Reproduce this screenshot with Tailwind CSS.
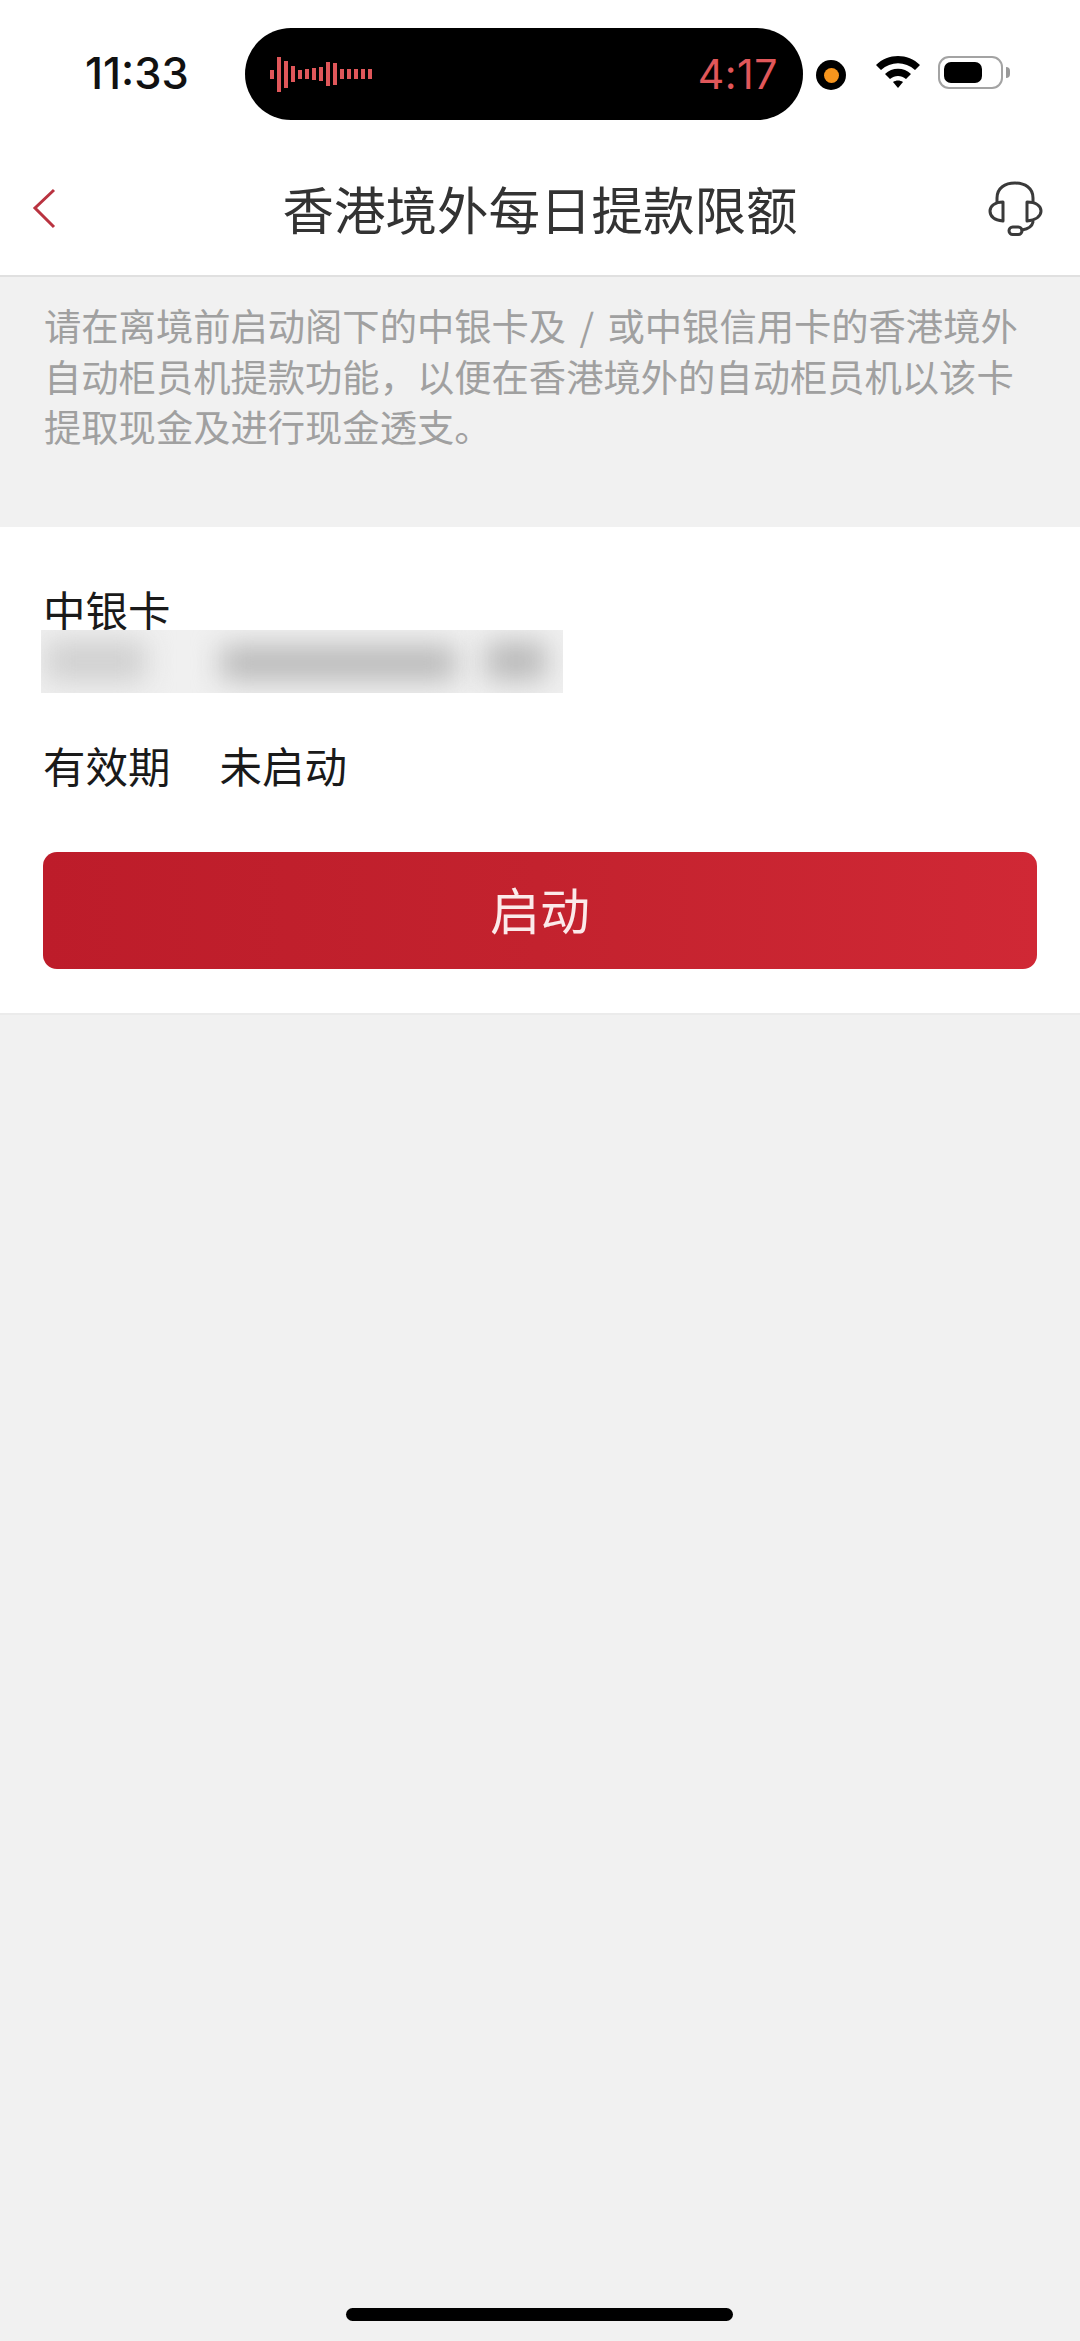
<!DOCTYPE html>
<html lang="zh-CN">

<head>
    <meta charset="UTF-8">
    <meta name="viewport" content="width=device-width, initial-scale=1.0">
    <title>香港境外每日提款限额</title>
    <script src="https://cdn.jsdelivr.net/npm/@tailwindcss/browser@4"></script>
</head>

<body class="bg-[#f1f1f1] font-['Noto_Sans_CJK_SC','Noto_Sans',sans-serif]">
    <div class="relative flex flex-col w-[1080px] h-[2341px] overflow-hidden">
        <!-- status bar -->
        <div class="flex items-start h-[146px] bg-white pt-[28px]">
            <div class="w-[245px] pl-[85px] pt-[20px] font-['Inter',sans-serif] font-medium text-[43.5px] leading-[50px] text-[#111]">11:33</div>
            <div class="flex items-center justify-between w-[558px] h-[92px] rounded-[46px] bg-black pl-[25px] pr-[25px]">
                <div class="flex items-center gap-[3px]">
                    <span class="w-[4px] h-[9px] bg-[#e0575a]"></span>
                    <span class="w-[4px] h-[35px] bg-[#e0575a]"></span>
                    <span class="w-[4px] h-[27px] bg-[#e0575a]"></span>
                    <span class="w-[4px] h-[16px] bg-[#e0575a]"></span>
                    <span class="w-[4px] h-[9px] bg-[#e0575a]"></span>
                    <span class="w-[4px] h-[10px] bg-[#e0575a]"></span>
                    <span class="w-[4px] h-[12px] bg-[#e0575a]"></span>
                    <span class="w-[4px] h-[14px] bg-[#e0575a]"></span>
                    <span class="w-[4px] h-[24px] bg-[#e0575a]"></span>
                    <span class="w-[4px] h-[22px] bg-[#e0575a]"></span>
                    <span class="w-[4px] h-[10px] bg-[#e0575a]"></span>
                    <span class="w-[4px] h-[10px] bg-[#e0575a]"></span>
                    <span class="w-[4px] h-[10px] bg-[#e0575a]"></span>
                    <span class="w-[4px] h-[10px] bg-[#e0575a]"></span>
                    <span class="w-[4px] h-[10px] bg-[#e0575a]"></span>
                </div>
                <span class="font-['Inter',sans-serif] font-normal text-[41px] leading-[48px] tracking-[0.5px] text-[#e0575a]">4:17</span>
            </div>
            <div class="flex items-center justify-center w-[30px] h-[30px] ml-[13px] mt-[32px] rounded-full bg-black">
                <span class="w-[15px] h-[15px] rounded-full bg-[#f7951d]"></span>
            </div>
            <!-- wifi -->
            <svg class="ml-[29px] mt-[26px]" width="46" height="36" viewBox="0 0 46 36">
                <path d="M1 11 C13 -1 33 -1 45 11 L40 16 C30 7 16 7 6 16 Z" fill="#000" />
                <path d="M10 20 C17 13 29 13 36 20 L31 25 C26 21 20 21 15 25 Z" fill="#000" />
                <path d="M18 28 C21 26 25 26 28 28 L23 34 Z" fill="#000" />
            </svg>
            <!-- battery -->
            <div class="flex items-center ml-[17px] mt-[28px]">
                <div class="w-[65px] h-[33px] rounded-[11px] border-[2px] border-[#a3a3a3] p-[4px] bg-white">
                    <div class="w-[38px] h-full rounded-[7px] bg-black"></div>
                </div>
                <span class="w-[4px] h-[11px] ml-[3px] rounded-r-full bg-[#999]"></span>
            </div>
        </div>

        <!-- nav -->
        <div class="grid grid-cols-[120px_1fr_120px] items-center h-[131px] pb-[6px] bg-white border-b-2 border-[#e0e0e0]">
            <svg class="ml-[30px]" width="28" height="44" viewBox="0 0 28 44" fill="none">
                <path d="M24 4 L5 22 L24 41" stroke="#b93340" stroke-width="3" />
            </svg>
            <div class="text-center text-[51.5px] leading-[64px] text-[#333]">香港境外每日提款限额</div>
            <svg class="ml-[10px]" width="90" height="80" viewBox="0 0 90 80" fill="none" stroke="#3a3a3a" stroke-width="3" stroke-linecap="round" stroke-linejoin="round">
                <path d="M27 34 V30 C27 20 35 15 45 15 C55 15 63 20 63 30 V34" />
                <path d="M33 34 V53 C24 52 20 48 20 43 C20 38 25 34 33 34 Z" />
                <path d="M57 34 V53 C66 52 71 48 71 43 C71 38 66 34 57 34 Z" />
                <path d="M63 54 C62 59 58 61 52 62" />
                <rect x="39" y="59" width="13" height="7.5" rx="3.7" />
            </svg>
        </div>

        <!-- notice -->
        <div class="h-[250px] px-[44px] pt-[23px] text-[37.3px] leading-[50.5px] text-[#a0a0a0]">
            请在离境前启动阁下的中银卡及<span class="px-[5px]"> / </span>或中银信用卡的香港境外<br>自动柜员机提款功能，以便在香港境外的自动柜员机以该卡<br>提取现金及进行现金透支。
        </div>

        <!-- card -->
        <div class="relative h-[488px] px-[43px] bg-white border-b-2 border-[#ebebeb]">
            <div class="pt-[54px] h-[173px] text-[42.5px] leading-[56px] text-[#1a1a1a]">中银卡</div>
            <div class="pt-[37px] h-[152px] flex gap-[49px] text-[42.5px] leading-[56px] text-[#1a1a1a]">
                <span>有效期</span>
                <span>未启动</span>
            </div>
            <button class="block w-[994px] h-[117px] pb-[6px] rounded-[14px] bg-gradient-to-r from-[#bd1c2a] via-[#c3222e] to-[#d02835] text-[50px] leading-[60px] text-[#fbeaea]">启动</button>

            <!-- masked card number -->
            <div class="absolute left-[41px] top-[103px] w-[522px] h-[63px] overflow-hidden bg-[#f0f0f0]">
                <div class="absolute left-[5px] top-[10px] w-[100px] h-[42px] bg-[#d0d0d0] blur-[14px]"></div>
                <div class="absolute left-[180px] top-[16px] w-[235px] h-[34px] bg-[#b8b8b8] blur-[14px]"></div>
                <div class="absolute left-[445px] top-[12px] w-[60px] h-[38px] bg-[#b8b8b8] blur-[14px]"></div>
            </div>
        </div>

        <!-- home indicator -->
        <div class="absolute left-[346px] top-[2308px] w-[387px] h-[13px] rounded-full bg-black"></div>
    </div>
</body>

</html>
